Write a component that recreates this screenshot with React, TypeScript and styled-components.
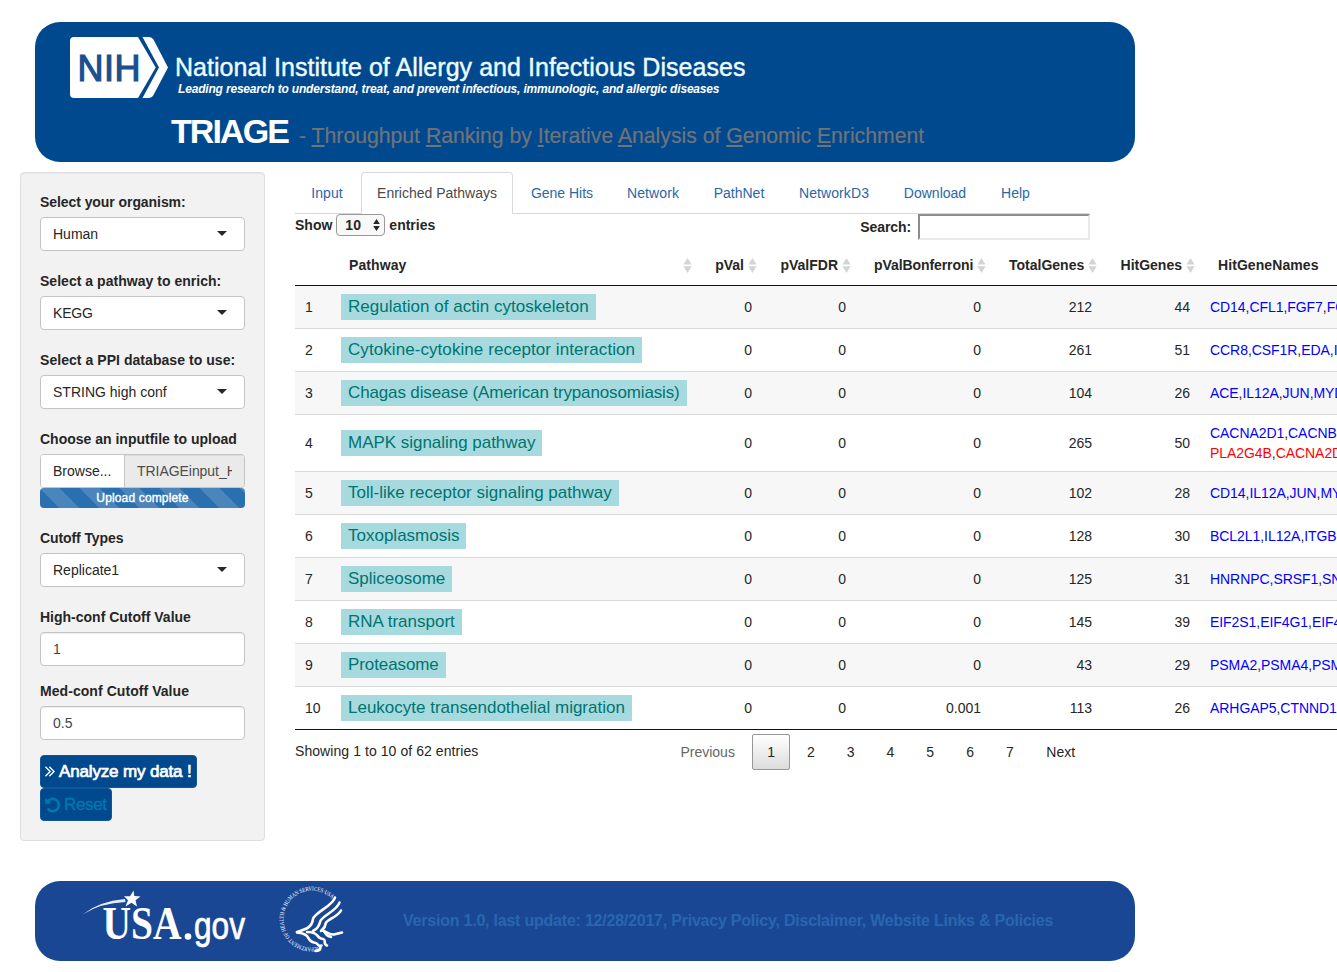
import React from 'react';
import styled, { createGlobalStyle } from 'styled-components';

const GlobalStyle = createGlobalStyle`
  *, *::before, *::after { box-sizing: border-box; }
  html, body { margin: 0; background: #fff; overflow: hidden; }
  body {
    font-family: "Liberation Sans", Arial, sans-serif;
    font-size: 14px;
    line-height: 20px;
    color: #262626;
  }
`;

const Page = styled.div`
  width: 1337px;
  height: 972px;
  padding: 22px 0 0 20px;
  overflow: hidden;
  white-space: nowrap;
`;

const Fit = styled.span<{ $ls?: number }>`
  letter-spacing: ${p => p.$ls ?? 0}px;
`;

/* ---------- header ---------- */

const Banner = styled.header`
  width: 1100px;
  height: 140px;
  margin-left: 15px;
  padding: 15px 0 0 35px;
  border-radius: 25px;
  background: #00498f;
  color: #fff;
`;

const Brand = styled.div`
  display: flex;
  height: 61px;
`;

const BrandText = styled.div`
  padding: 16px 0 0 7px;
`;

const Institute = styled.div`
  font-size: 25px;
  line-height: 29px;
  color: #eefcff;
  -webkit-text-stroke: 0.4px #eefcff;
`;

const Tagline = styled.div`
  padding-left: 3px;
  font-size: 12px;
  line-height: 14px;
  font-weight: bold;
  font-style: italic;
`;

const TitleRow = styled.h1`
  display: flex;
  align-items: baseline;
  margin: 13px 0 0 101px;
  line-height: 40px;
  font-size: 34px;
  font-weight: bold;
`;

const Subtitle = styled.small`
  margin-left: 11px;
  font-size: 21.2px;
  font-weight: normal;
  color: #707478;
  -webkit-text-stroke: 0.2px #707478;
  u { text-underline-offset: 2px; text-decoration-thickness: 1.5px; text-decoration-skip-ink: none; }
`;

/* ---------- columns ---------- */

const Columns = styled.div`
  display: flex;
  align-items: flex-start;
  gap: 30px;
  margin-top: 10px;
`;

const Sidebar = styled.aside`
  flex: none;
  width: 245px;
  height: 669px;
  padding: 19px;
  border: 1px solid #dfdfdf;
  border-radius: 4px;
  background: #f2f2f2;
  box-shadow: inset 0 1px 1px rgba(0, 0, 0, 0.05);
`;

const Field = styled.div<{ $gap: number }>`
  margin-bottom: ${p => p.$gap}px;
`;

const Label = styled.label`
  display: block;
  margin-bottom: 5px;
  font-weight: bold;
`;

const Control = styled.div<{ $inset?: boolean }>`
  display: flex;
  align-items: center;
  justify-content: space-between;
  height: 34px;
  padding: 0 17px 0 12px;
  border: 1px solid #c4c4c4;
  border-radius: 4px;
  background: #fff;
  color: ${p => (p.$inset ? '#444' : '#262626')};
  box-shadow: ${p => (p.$inset ? 'inset 0 1px 1px rgba(0,0,0,0.075)' : 'none')};
`;

const Caret = styled.i`
  margin-bottom: 1px;
  border: 5px solid transparent;
  border-top-color: #262626;
  border-bottom: 0;
`;

const FileGroup = styled.div`
  display: flex;
  height: 34px;
  border: 1px solid #c4c4c4;
  border-radius: 4px;
  overflow: hidden;
  line-height: 32px;
`;

const Browse = styled.div`
  flex: none;
  width: 83px;
  padding-left: 12px;
  background: #fff;
`;

const FileName = styled.div`
  flex: 1;
  min-width: 0;
  padding: 0 12px;
  border-left: 1px solid #c4c4c4;
  background: #eaeaea;
  color: #4c4c4c;
  box-shadow: inset 0 1px 1px rgba(0, 0, 0, 0.075);
`;

const FileNameText = styled.span`
  display: block;
  overflow: hidden;
  letter-spacing: -0.05px;
`;

const Progress = styled.div`
  height: 20px;
  border-radius: 4px;
  background-color: #2a70b0;
  background-image: linear-gradient(45deg, rgba(255,255,255,.15) 25%, transparent 25%, transparent 50%, rgba(255,255,255,.15) 50%, rgba(255,255,255,.15) 75%, transparent 75%);
  background-size: 40px 40px;
  color: #fff;
  font-size: 12px;
  text-align: center;
  letter-spacing: 0.15px;
  -webkit-text-stroke: 0.4px #fff;
`;

const ActionButton = styled.button<{ $w: number; $muted?: boolean }>`
  display: flex;
  align-items: center;
  gap: ${p => (p.$muted ? 3 : 4)}px;
  width: ${p => p.$w}px;
  height: 33px;
  padding: 0 0 0 4px;
  border: 1px solid #12569a;
  border-radius: 4px;
  background: #00498f;
  font: 17px "Liberation Sans", sans-serif;
  white-space: nowrap;
  color: ${p => (p.$muted ? '#0078b0' : '#fff')};
  -webkit-text-stroke: ${p => (p.$muted ? 0.3 : 0.7)}px currentColor;
  svg { flex: none; fill: currentColor; }
`;

/* ---------- tabs ---------- */

const Main = styled.main`
  flex: none;
  width: 1200px;
`;

const Tabs = styled.nav`
  display: flex;
  gap: 2px;
  width: 795px;
  height: 42px;
  border-bottom: 1px solid #d9d9d9;
`;

const Tab = styled.a<{ $w: number; $active?: boolean }>`
  width: ${p => p.$w}px;
  height: 42px;
  line-height: 40px;
  text-align: center;
  border: 1px solid ${p => (p.$active ? '#d9d9d9' : 'transparent')};
  border-bottom: 0;
  border-radius: 4px 4px 0 0;
  background: ${p => (p.$active ? '#fff' : 'none')};
  color: ${p => (p.$active ? '#4a4a4a' : '#2a67a8')};
`;

/* ---------- table ---------- */

const Tools = styled.div`
  display: flex;
  justify-content: space-between;
  align-items: flex-start;
  width: 795px;
  height: 31px;
  font-weight: bold;
`;

const Length = styled.label`
  display: flex;
  align-items: center;
  height: 22px;
  gap: 4px;
`;

const LengthSelect = styled.span`
  display: flex;
  align-items: center;
  justify-content: space-between;
  width: 49px;
  height: 22px;
  padding: 0 3px 0 8px;
  border: 1px solid #999;
  border-radius: 4px;
  background: #f8f8f8;
`;

const Search = styled.label`
  display: flex;
  align-items: center;
  gap: 7px;
  height: 26px;
`;

const SearchInput = styled.input`
  width: 172px;
  height: 26px;
  border: 2px solid;
  border-color: #8d8d8d #e9e9e9 #e9e9e9 #8d8d8d;
  background: #fff;
`;

const Table = styled.table`
  width: 1200px;
  table-layout: fixed;
  border-collapse: separate;
  border-spacing: 0;
  border-bottom: 1px solid #111;
`;

const HeadCell = styled.th<{ $left?: boolean }>`
  position: relative;
  height: 41px;
  padding: 0 18px;
  border-bottom: 1px solid #111;
  text-align: ${p => (p.$left ? 'left' : 'right')};
`;

const SortIcon = styled.svg`
  position: absolute;
  right: 5px;
  top: 13px;
`;

const Row = styled.tr`
  &:nth-child(odd) td { background: #f7f7f7; }
  &:nth-child(even) td { background: #fff; }
  &:first-child td { border-top: 0; height: 42px; }
`;

const Cell = styled.td<{ $right?: boolean; $tall?: boolean }>`
  height: ${p => (p.$tall ? 57 : 43)}px;
  padding: 0 10px;
  border-top: 1px solid #d9d9d9;
  text-align: ${p => (p.$right ? 'right' : 'left')};
`;

const Badge = styled.span<{ $w: number }>`
  display: block;
  width: ${p => p.$w}px;
  height: 26px;
  padding-left: 7px;
  line-height: 25px;
  background: #a6dadf;
  color: #00746f;
  font-size: 17px;
`;

const GeneLine = styled.div`
  letter-spacing: -0.06px;
`;

const Gene = styled.span<{ $red?: boolean }>`
  color: ${p => (p.$red ? '#f00' : '#00f')};
`;

const Foot = styled.div`
  display: flex;
  justify-content: space-between;
  width: 796px;
  padding-top: 4px;
`;

const Info = styled.div`
  padding-top: 7px;
`;

const Pager = styled.div`
  display: flex;
  gap: 2px;
`;

const PageButton = styled.a<{ $w: number; $active?: boolean; $disabled?: boolean }>`
  width: ${p => p.$w}px;
  height: 36px;
  line-height: 34px;
  text-align: center;
  text-indent: -0.5px;
  border: 1px solid ${p => (p.$active ? '#979797' : 'transparent')};
  border-radius: 2px;
  background: ${p => (p.$active ? 'linear-gradient(#fff, #dcdcdc)' : 'none')};
  color: ${p => (p.$disabled ? '#666' : '#262626')};
`;

/* ---------- footer ---------- */

const Footer = styled.footer`
  display: flex;
  width: 1100px;
  height: 80px;
  margin: 40px 0 0 15px;
  border-radius: 25px;
  background: #194794;
`;

const FooterLogos = styled.div`
  display: flex;
  gap: 30px;
  width: 368px;
  padding-left: 48px;
`;

const FooterText = styled.div`
  padding-top: 30px;
  font-size: 16px;
  font-weight: bold;
  color: #2867af;
`;

const Sort = () => (
  <SortIcon width="9" height="15" viewBox="0 0 9 15" fill="#d4d4d4">
    <path d="M4.5 0 8.6 6.6H.4zM4.5 15 .4 8.2h8.2z" />
  </SortIcon>
);

const NihLogo = () => (
  <svg width="98" height="61" viewBox="0 0 98 61">
    <path d="M4 0H68L85.700 30.500 68 61H4Q0 61 0 57V4Q0 0 4 0Z" fill="#fff" />
    <path d="M72.500 0H79Q82 0 83.500 2.500L98 30.500 83.500 58Q82 61 78 61H72.500L89 30.500Z" fill="#fff" />
    <text x="7.500" y="44" fontSize="36" textLength="63" fill="#1b4f8f" stroke="#1b4f8f" strokeWidth="1.200" fontFamily="Liberation Sans">NIH</text>
  </svg>
);

const UsaLogo = () => (
  <svg width="165" height="80" viewBox="0 0 165 80" fill="#fff">
    <path d="M-1 34Q15 20.500 42 18L42.500 21Q17 22 -1 34Z" opacity=".9" />
    <path d="M50.500 9.500 51.300 15 57.500 15.500 52.500 19.200 54 25.500 48.500 21.700 42.500 25.500 45 19.300 41 15.300 47 15.200Z" />
    <text x="19.500" y="58" fontSize="46" fontWeight="bold" textLength="79" lengthAdjust="spacingAndGlyphs" fontFamily="Liberation Serif">USA</text>
    <circle cx="105" cy="55.500" r="3.300" />
    <text x="111" y="58" fontSize="38" textLength="51" lengthAdjust="spacingAndGlyphs" fontFamily="Liberation Sans" stroke="#fff" strokeWidth=".7">gov</text>
  </svg>
);

const HhsLogo = () => (
  <svg width="68" height="80" viewBox="0 0 68 80" fill="none" stroke="#fff">
    <defs><path id="ring" d="M42 65.500A28.500 28.500 0 1 1 56 20" /></defs>
    <text fontSize="6" fill="#fff" stroke="none" fontFamily="Liberation Serif">
      <textPath href="#ring" textLength="119" lengthAdjust="spacingAndGlyphs">DEPARTMENT OF HEALTH &amp; HUMAN SERVICES·USA</textPath>
    </text>
    <g strokeWidth="2.600" strokeLinecap="round" strokeLinejoin="round">
      <path d="M57 16.500C55 25 37 31 35 38 34 46 29 48 19 51" />
      <path d="M61.500 21.500C59 30 43 35 42 41 41 46 39 48 35 50" />
      <path d="M63 29.500C59 37 48 38 47.500 43 47 48 44 48 43 50" />
      <path d="M19 51.500C34 53 28 60 36 61.500 42 62 38 66 43.500 64.500" />
      <path d="M29 51C41 51 38 56 43 57.500 50 58 44 63 49 64.500" />
      <path d="M44 49.500C50 51 51 54 56 53.500L64 51.500" />
      <path d="M46 50C48 54 49 55 53 56M37.500 70Q42 70 42.500 66.500" />
    </g>
  </svg>
);

const ICON_ANGLES = 'M979 960q0 13-10 23l-466 466q-10 10-23 10t-23-10l-50-50q-10-10-10-23t10-23l393-393-393-393q-10-10-10-23t10-23l50-50q10-10 23-10t23 10l466 466q10 10 10 23zm384 0q0 13-10 23l-466 466q-10 10-23 10t-23-10l-50-50q-10-10-10-23t10-23l393-393-393-393q-10-10-10-23t10-23l50-50q10-10 23-10t23 10l466 466q10 10 10 23z';
const ICON_UNDO = 'M1664 896q0 156-61 298t-164 245-245 164-298 61q-172 0-327-72.5t-264-204.500q-7-10-6.500-22.500t8.500-20.500l137-138q10-9 25-9 16 2 23 12 73 95 179 147t225 52q104 0 198.500-40.500t163.500-109.500 109.500-163.500 40.500-198.500-40.500-198.500-109.500-163.500-163.500-109.500-198.500-40.500q-98 0-188 35.500t-160 101.500l137 138q31 30 14 69-17 40-59 40h-448q-26 0-45-19t-19-45v-448q0-42 40-59 39-17 69 14l130 129q107-101 244.500-156.500t284.500-55.500q156 0 298 61t245 164 164 245 61 298z';

const tabs: [string, number, number?][] = [
  ['Input', 64, 0.1], ['Enriched Pathways', 152], ['Gene Hits', 94], ['Network', 84, 0.1],
  ['PathNet', 84], ['NetworkD3', 102, 0.1], ['Download', 96], ['Help', 61],
];

const heads: [string, number?][] = [
  ['pVal'], ['pValFDR'], ['pValBonferroni', -0.08], ['TotalGenes'], ['HitGenes'],
];

const colWidths = [36, 366, 65, 94, 135, 111, 98, 295];

type Data = { name: string; w: number; ls?: number; bonf?: string; total: number; hit: number; genes: string; more?: string };

const rows: Data[] = [
  { name: 'Regulation of actin cytoskeleton', w: 255, ls: 0.02, total: 212, hit: 44, genes: 'CD14,CFL1,FGF7,FG' },
  { name: 'Cytokine-cytokine receptor interaction', w: 301, ls: 0.07, total: 261, hit: 51, genes: 'CCR8,CSF1R,EDA,IL' },
  { name: 'Chagas disease (American trypanosomiasis)', w: 346, ls: -0.14, total: 104, hit: 26, genes: 'ACE,IL12A,JUN,MYD' },
  { name: 'MAPK signaling pathway', w: 201, ls: -0.03, total: 265, hit: 50, genes: 'CACNA2D1,CACNB', more: 'PLA2G4B,CACNA2D' },
  { name: 'Toll-like receptor signaling pathway', w: 278, total: 102, hit: 28, genes: 'CD14,IL12A,JUN,MY' },
  { name: 'Toxoplasmosis', w: 125, total: 128, hit: 30, genes: 'BCL2L1,IL12A,ITGB' },
  { name: 'Spliceosome', w: 111, total: 125, hit: 31, genes: 'HNRNPC,SRSF1,SN' },
  { name: 'RNA transport', w: 121, total: 145, hit: 39, genes: 'EIF2S1,EIF4G1,EIF4' },
  { name: 'Proteasome', w: 105, ls: -0.1, total: 43, hit: 29, genes: 'PSMA2,PSMA4,PSM' },
  { name: 'Leukocyte transendothelial migration', w: 291, bonf: '0.001', total: 113, hit: 26, genes: 'ARHGAP5,CTNND1,' },
];

const Genes = ({ list, red }: { list: string; red?: boolean }) => (
  <GeneLine>
    {list.split(',').map((g, i) => (
      <React.Fragment key={i}>{i > 0 && ','}<Gene $red={red}>{g}</Gene></React.Fragment>
    ))}
  </GeneLine>
);

const SelectField = ({ label, value, ls, vls }: { label: string; value: string; ls?: number; vls?: number }) => (
  <Field $gap={20}>
    <Label><Fit $ls={ls}>{label}</Fit></Label>
    <Control><Fit $ls={vls}>{value}</Fit><Caret /></Control>
  </Field>
);

export default function App() {
  return (
    <Page>
      <GlobalStyle />
      <Banner>
        <Brand>
          <NihLogo />
          <BrandText>
            <Institute><Fit $ls={0.04}>National Institute of Allergy and Infectious Diseases</Fit></Institute>
            <Tagline><Fit $ls={-0.18}>Leading research to understand, treat, and prevent infectious, immunologic, and allergic diseases</Fit></Tagline>
          </BrandText>
        </Brand>
        <TitleRow>
          <Fit $ls={-1.9}>TRIAGE</Fit>
          <Subtitle>
            <Fit>- <u>T</u>hroughput <u>R</u>anking by <u>I</u>terative <u>A</u>nalysis of <u>G</u>enomic <u>E</u>nrichment</Fit>
          </Subtitle>
        </TitleRow>
      </Banner>

      <Columns>
        <Sidebar>
          <SelectField label="Select your organism:" value="Human" ls={-0.07} />
          <SelectField label="Select a pathway to enrich:" value="KEGG" ls={0.03} vls={-0.2} />
          <SelectField label="Select a PPI database to use:" value="STRING high conf" ls={0.05} />
          <Field $gap={20}>
            <Label><Fit>Choose an inputfile to upload</Fit></Label>
            <FileGroup>
              <Browse>Browse...</Browse>
              <FileName><FileNameText>TRIAGEinput_H</FileNameText></FileName>
            </FileGroup>
            <Progress>Upload complete</Progress>
          </Field>
          <SelectField label="Cutoff Types" value="Replicate1" ls={-0.1} />
          <Field $gap={15}>
            <Label><Fit>High-conf Cutoff Value</Fit></Label>
            <Control $inset>1</Control>
          </Field>
          <Field $gap={15}>
            <Label><Fit $ls={0.06}>Med-conf Cutoff Value</Fit></Label>
            <Control $inset>0.5</Control>
          </Field>
          <ActionButton $w={157}>
            <svg width="10" height="11" viewBox="390 450 990 1020"><path d={ICON_ANGLES} stroke="none" /></svg>
            <Fit $ls={-0.15}>Analyze my data !</Fit>
          </ActionButton>
          <ActionButton $w={72} $muted>
            <svg width="16" height="16" viewBox="100 64 1664 1664"><path d={ICON_UNDO} /></svg>
            <Fit $ls={-0.35}>Reset</Fit>
          </ActionButton>
        </Sidebar>

        <Main>
          <Tabs>
            {tabs.map(([t, w, ls], i) => (
              <Tab key={t} $w={w} $active={i === 1}><Fit $ls={ls}>{t}</Fit></Tab>
            ))}
          </Tabs>
          <Tools>
            <Length>
              <Fit>Show</Fit>
              <LengthSelect>
                10
                <svg width="9" height="12" viewBox="0 0 9 12" fill="#262626"><path d="M4.500 0 7.800 5H1.200zM4.500 12 1.200 7h6.600z" /></svg>
              </LengthSelect>
              <Fit>entries</Fit>
            </Length>
            <Search><Fit $ls={-0.1}>Search:</Fit><SearchInput /></Search>
          </Tools>
          <Table>
            <colgroup>{colWidths.map((w, i) => <col key={i} width={w} />)}</colgroup>
            <thead>
              <tr>
                <HeadCell />
                <HeadCell $left><Fit $ls={0.1}>Pathway</Fit><Sort /></HeadCell>
                {heads.map(([h, ls]) => (
                  <HeadCell key={h}><Fit $ls={ls}>{h}</Fit><Sort /></HeadCell>
                ))}
                <HeadCell $left><Fit $ls={0.08}>HitGeneNames</Fit></HeadCell>
              </tr>
            </thead>
            <tbody>
              {rows.map((r, i) => (
                <Row key={r.name}>
                  <Cell $tall={!!r.more}>{i + 1}</Cell>
                  <Cell><Badge $w={r.w}><Fit $ls={r.ls}>{r.name}</Fit></Badge></Cell>
                  <Cell $right>0</Cell>
                  <Cell $right>0</Cell>
                  <Cell $right>{r.bonf ?? '0'}</Cell>
                  <Cell $right>{r.total}</Cell>
                  <Cell $right>{r.hit}</Cell>
                  <Cell>
                    <Genes list={r.genes} />
                    {r.more && <Genes list={r.more} red />}
                  </Cell>
                </Row>
              ))}
            </tbody>
          </Table>
          <Foot>
            <Info><Fit $ls={0.07}>Showing 1 to 10 of 62 entries</Fit></Info>
            <Pager>
              <PageButton $w={85} $disabled>Previous</PageButton>
              {[1, 2, 3, 4, 5, 6, 7].map(n => (
                <PageButton key={n} $w={37.8} $active={n === 1}>{n}</PageButton>
              ))}
              <PageButton $w={60}>Next</PageButton>
            </Pager>
          </Foot>
        </Main>
      </Columns>

      <Footer>
        <FooterLogos>
          <UsaLogo />
          <HhsLogo />
        </FooterLogos>
        <FooterText>
          <Fit $ls={-0.22}>Version 1.0, last update: 12/28/2017, Privacy Policy, Disclaimer, Website Links &amp; Policies</Fit>
        </FooterText>
      </Footer>
    </Page>
  );
}
